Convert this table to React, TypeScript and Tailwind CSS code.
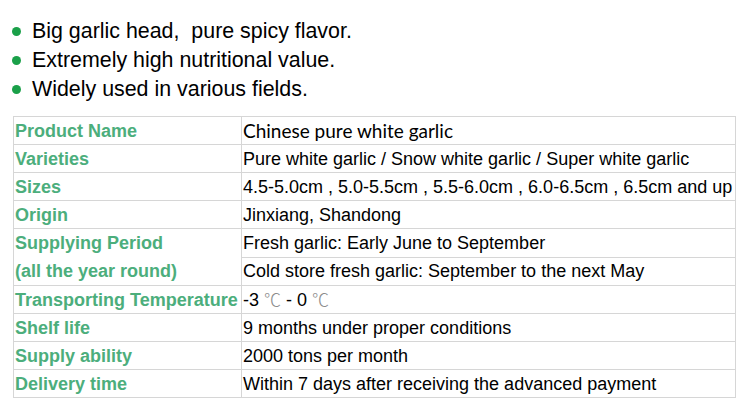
import React from 'react';

const points = [
  'Big garlic head,\u00a0 pure spicy flavor.',
  'Extremely high nutritional value.',
  'Widely used in various fields.',
];

const cell = 'border border-[#d6d6d6] h-[28px] p-0 pl-px align-middle whitespace-nowrap';
const label = `${cell} w-[228px] font-bold text-[#4cae7c]`;

function Deg() {
  return <span className="text-[#8c8c8c] font-['Noto_Sans_CJK_SC',sans-serif] font-light text-[17px]">℃</span>;
}

export default function App() {
  return (
    <div className="w-[750px] h-[411px] bg-white font-['Liberation_Sans',Arial,sans-serif] text-black overflow-hidden">
      <ul className="pt-[17px] pl-[12px]">
        {points.map((p) => (
          <li key={p} className="flex items-center gap-[11px] text-[21.4px] leading-[29px]">
            <span className="w-[9px] h-[9px] rounded-full bg-[#1aa049] shrink-0" />
            <span>{p}</span>
          </li>
        ))}
      </ul>

      <table className="ml-[13px] mt-[12px] w-[723px] border-collapse text-[18px] leading-[20px]">
        <tbody>
          <tr>
            <td className={label}>Product Name</td>
            <td className={`${cell} font-['Lato',sans-serif] text-[19px]`}>Chinese pure white garlic</td>
          </tr>
          <tr>
            <td className={label}>Varieties</td>
            <td className={cell}>Pure white garlic / Snow white garlic / Super white garlic</td>
          </tr>
          <tr>
            <td className={label}>Sizes</td>
            <td className={cell}>4.5-5.0cm , 5.0-5.5cm , 5.5-6.0cm , 6.0-6.5cm , 6.5cm and up</td>
          </tr>
          <tr>
            <td className={label}>Origin</td>
            <td className={cell}>Jinxiang, Shandong</td>
          </tr>
          <tr>
            <td rowSpan={2} className={`${label} leading-[28px]`}>
              Supplying Period
              <br />
              (all the year round)
            </td>
            <td className={cell}>Fresh garlic: Early June to September</td>
          </tr>
          <tr>
            <td className={cell}>Cold store fresh garlic: September to the next May</td>
          </tr>
          <tr>
            <td className={label}>Transporting Temperature</td>
            <td className={cell}>
              -3 <Deg /> - 0 <Deg />
            </td>
          </tr>
          <tr>
            <td className={label}>Shelf life</td>
            <td className={cell}>9 months under proper conditions</td>
          </tr>
          <tr>
            <td className={label}>Supply ability</td>
            <td className={cell}>2000 tons per month</td>
          </tr>
          <tr>
            <td className={label}>Delivery time</td>
            <td className={cell}>Within 7 days after receiving the advanced payment</td>
          </tr>
        </tbody>
      </table>
    </div>
  );
}
